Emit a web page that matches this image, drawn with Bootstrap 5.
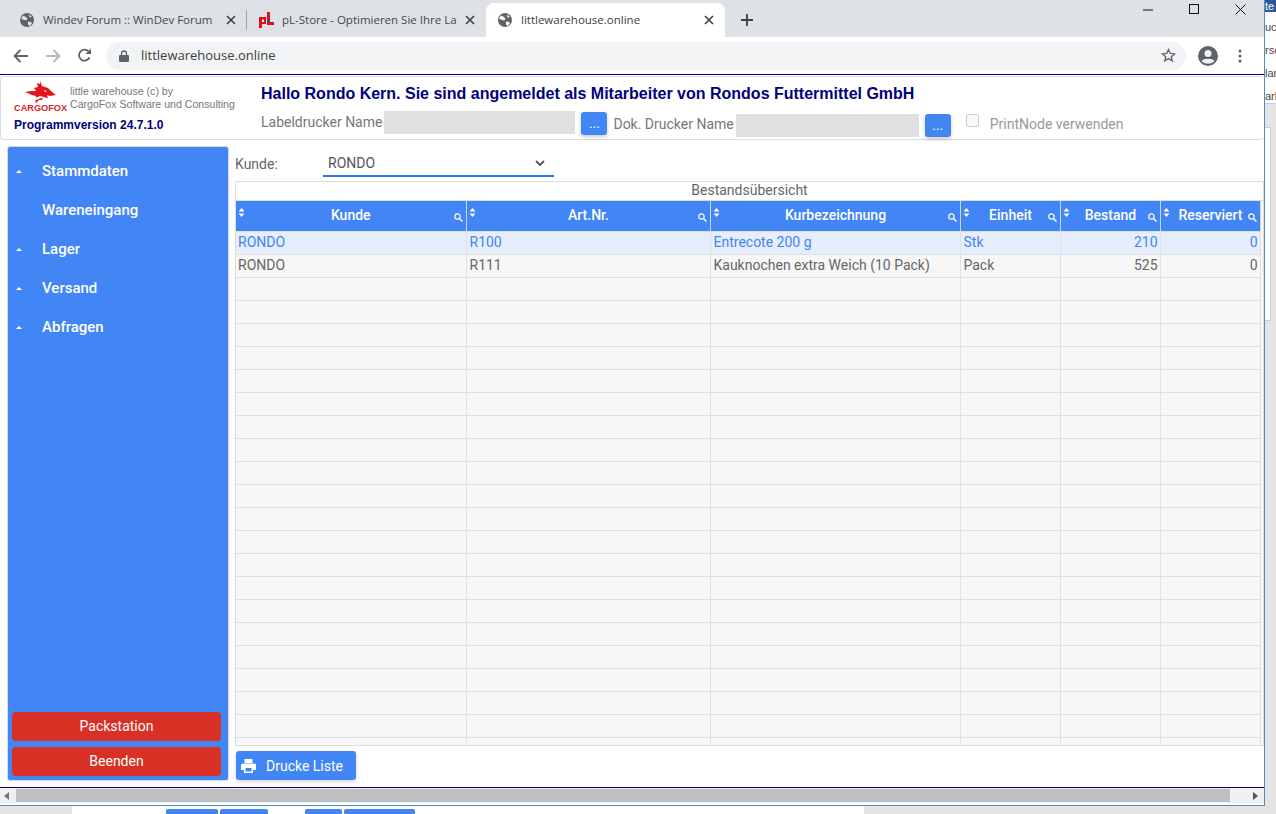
<!DOCTYPE html>
<html lang="de">
<head>
  <meta charset="UTF-8" />
  <title>littlewarehouse.online</title>
  <link href="https://cdn.jsdelivr.net/npm/bootstrap@5.3.0/dist/css/bootstrap.min.css" rel="stylesheet" />
  <style>
    html, body { height: 814px; overflow: hidden; }
    body { font-family: Roboto, "Liberation Sans", sans-serif; font-size: 14px; color: #666; background: #e4e4e4; }
    .shot { width: 1276px; height: 814px; }
    .win { width: 1265px; height: 806px; background: #fff; border-right: 1px solid #4a90c4; border-bottom: 1px solid #4a90c4; flex: none; }

    /* chrome */
    .tabstrip { height: 37px; background: #dee1e6; padding: 3px 0 0 9px; font-family: "Open Sans", sans-serif; font-size: 11.5px; color: #45484d; }
    .brtab { width: 234px; height: 34px; padding: 0 7px 0 11px; border-radius: 8px 8px 0 0; white-space: nowrap; }
    .brtab.second { width: 231px; padding: 0 6px 0 8px; }
    .brtab.on { background: #fff; width: 239px; padding: 0 11px 0 12px; margin-left: 5px; color: #3c4043; }
    .tabtitle { flex: 1; overflow: hidden; margin-left: 9px; }
    .brtab.second .tabtitle { margin-left: 8px; }
    .tabsep { width: 1px; height: 20px; background: #9da0a5; margin: 0 3px; flex: none; }
    .wincontrols { margin-left: auto; gap: 35px; padding: 0 18px 21px 0; }
    .toolrow { height: 37px; padding: 0 0 0 13px; }
    .omni { width: 1080px; height: 28px; margin-left: 14px; background: #f1f3f4; border-radius: 14px; padding: 0 10px 0 13px; font-family: "Open Sans", sans-serif; font-size: 13px; color: #3c4043; }
    .omnitext { margin-left: 12px; }
    .avatar { margin-left: 12px; }
    .kebab { margin-left: 20px; }
    .navyline { height: 2px; background: #fff; border-top: 1px solid #000080; }

    /* app header */
    .apphead { height: 64px; border: 1px solid #ddd; border-right: 0; border-radius: 4px; padding: 2px 0 0 13px; }
    .logoblock { width: 247px; flex: none; }
    .logomark { width: 51px; }
    .cargofox { font: bold 9.2px/11px "Liberation Sans", sans-serif; color: #d9261c; white-space: nowrap; }
    .bytext { line-height: 13px; color: #777; margin-left: 5px; padding-top: 6px; white-space: nowrap; font-family: "Liberation Sans", sans-serif; font-size: 10.6px; }
    .progver { font: bold 12px/14px "Liberation Sans", sans-serif; color: #000080; margin-top: 4px; }
    .hello { font: bold 16px/18px "Liberation Sans", sans-serif; color: #000080; margin: 6px 0 8px; white-space: nowrap; }
    .printrow { height: 26px; }
    .pname { background: #e0e0e0; height: 23px; flex: none; }
    .pname.label { width: 191px; margin-left: 2px; align-self: flex-start; }
    .pname.doc { width: 183px; margin-left: 2px; margin-top: 3px; }
    .dots { width: 26px; height: 23px; margin-left: 6px; background: #4285f4; color: #fff; border-radius: 3px; border: 0; padding: 0; font-size: 14px; line-height: 23px; box-shadow: 0 2px 4px rgba(0,0,0,.2); flex: none; }
    .dots.label { align-self: flex-start; margin-top: 1px; }
    .dots.doc { margin-top: 3px; }
    .plabel { color: #777; white-space: nowrap; }
    .plabel.label { align-self: flex-start; line-height: 23px; }
    .plabel.doc { margin-left: 6px; margin-top: 3px; }
    .plabel.node { margin-left: 11px; margin-top: 3px; color: #999; }
    .pcheck { width: 13px; height: 13px; margin-left: 15px; margin-top: 3px; border: 1px solid #ccc; border-radius: 2px; background: #f8f8f8; flex: none; }

    /* sidebar */
    .appbody { height: 647px; padding: 5px 0 0 7px; }
    .sidemenu { width: 222px; height: 635px; margin-top: 1px; background: #4285f4; border-radius: 3px; border: 1px solid #d5dbe6; padding: 5px 6px 4px 4px; flex: none; }
    .menuitem { height: 39px; color: #fff; font-size: 15px; font-weight: 500; }
    .arrowmark { width: 30px; padding-left: 4px; }
    .arrowmark i { display: block; width: 0; height: 0; border: 3px solid transparent; border-top: 0; border-bottom: 3px solid #fff; }
    .redbtn { height: 29px; width: 209px; background: #d93025; color: #fff; border: 0; border-radius: 4px; font-size: 14px; padding: 0; flex: none; }
    .redbtn + .redbtn { margin-top: 6px; }

    /* table area */
    .workarea { width: 1029px; margin-left: 6px; flex: none; }
    .kunderow { height: 25px; margin-top: 6px; }
    .kundelabel { width: 88px; padding-top: 2px; }
    .kundeselect { width: 231px; height: 26px; border-bottom: 2px solid #2a78f0; padding: 2px 9px 0 5px; color: #555; }
    .gridbox { height: 565px; margin: 5px 0 0 0; border: 1px solid #ddd; overflow: hidden; background: #f7f7f7; }
    .gridcaption { height: 19px; line-height: 17px; text-align: center; border-bottom: 1px solid #ddd; background: #fff; }
    .stock { table-layout: fixed; width: 1024px; margin: 0; --bs-table-bg: #f7f7f7; --bs-table-color: #666; }
    .stock col:nth-child(1) { width: 230px; }
    .stock col:nth-child(2) { width: 244px; }
    .stock col:nth-child(3) { width: 250px; }
    .stock col:nth-child(4), .stock col:nth-child(5), .stock col:nth-child(6) { width: 100px; }
    .stock > * > tr > * { border: 1px solid #e0e0e0; border-width: 0 1px 1px 0; padding: 0 2px 0 3px; height: 23px; line-height: 21px; white-space: nowrap; overflow: hidden; }
    .stock > * > tr > :first-child { padding: 0 2px; }
    .stock th { height: 30px !important; background: #4285f4; color: #fff; font-weight: 500; text-align: center; vertical-align: middle; border-right-color: #cfd6e2 !important; position: relative; }
    .stock .picked td { background: #e6eefb; color: #4285f4; }
    .stock td.num { text-align: right; }
    .sorticon { position: absolute; left: 2px; top: 7px; }
    .findicon { position: absolute; right: 3px; top: 12px; }
    .printbtn { width: 120px; height: 29px; margin: 5px 0 0 1px; background: #4285f4; color: #fff; border: 0; border-radius: 3px; padding: 0 0 0 5px; box-shadow: 0 2px 4px rgba(0,0,0,.15); font-size: 14px; gap: 10px; }
    .printtext { padding-top: 1px; }

    /* page scrollbar */
    .hscroll { height: 16px; background: #f0f0f0; border-top: 1px solid #000080; padding: 1px 0 0 0; }
    .hthumb { width: 1214px; height: 13px; background: #bfbfbf; margin: 0 23px 0 7px; flex: none; }
    .scrollarrow { flex: none; margin-top: 3px; }
    .scrollarrow.left { margin-left: 4px; }

    /* neighbouring window */
    .strip { width: 11px; height: 806px; overflow: hidden; background: #e4e4e4; flex: none; font-family: "Liberation Sans", sans-serif; font-size: 11px; }
    .striptop { height: 12px; background: #2b579a; color: #fff; line-height: 12px; }
    .striptext { background: #fff; height: 92px; color: #444; border-bottom: 1px solid #ccc; line-height: 23px; padding-top: 4px; white-space: nowrap; }
    .strippanel { width: 6px; height: 194px; margin-top: 23px; background: #fff; border: 1px solid #ccc; border-left: 0; }
    .backrow { height: 8px; overflow: hidden; padding-left: 72px; }
    .backwhite { width: 792px; background: #fff; height: 8px; padding: 3px 0 0 94px; gap: 2px; }
    .backbtn { height: 5px; background: #4285f4; border-radius: 2px 2px 0 0; flex: none; }
    .backbtn.b1 { width: 52px; }
    .backbtn.b2 { width: 48px; }
    .backbtn.b3 { width: 37px; margin-left: 35px; }
    .backbtn.b4 { width: 71px; }
  </style>
</head>
<body>
<div class="shot">
  <div class="d-flex">
    <div class="win">
      <!-- browser tabs -->
      <div class="tabstrip d-flex">
        <div class="brtab d-flex align-items-center">
          <svg width="14" height="14" viewBox="0 0 14 14" class="flex-shrink-0"><circle cx="7" cy="7" r="7" fill="#5f6368"/><path d="M3 2.500l3 1.500 1.500 2-1.500 1.500-3-1-2-1zM8 8.500l3 .5 1 1.500-2.500 2.500-1.500-1.500zM9 1.500l3 2.500-2.500.5z" fill="#dee1e6"/></svg>
          <span class="tabtitle">Windev Forum :: WinDev Forum</span>
          <svg width="10" height="10" viewBox="0 0 10 10"><path d="M1 1l8 8M9 1l-8 8" stroke="#3c4043" stroke-width="1.600"/></svg>
        </div>
        <div class="tabsep align-self-center"></div>
        <div class="brtab second d-flex align-items-center">
          <svg width="16" height="18" viewBox="0 0 16 18" class="flex-shrink-0"><path d="M9 1h3v10h4v3H9z" fill="#e0101a"/><path d="M1 6h7v7H4v4H1z" fill="#e0101a"/><path d="M4 8.500h2v2.500H4z" fill="#fff"/><path d="M9 9h3v2H9z" fill="#2a4a9a"/></svg>
          <span class="tabtitle">pL-Store - Optimieren Sie Ihre La</span>
          <svg width="10" height="10" viewBox="0 0 10 10"><path d="M1 1l8 8M9 1l-8 8" stroke="#3c4043" stroke-width="1.600"/></svg>
        </div>
        <div class="brtab on d-flex align-items-center">
          <svg width="14" height="14" viewBox="0 0 14 14" class="flex-shrink-0"><circle cx="7" cy="7" r="7" fill="#5f6368"/><path d="M3 2.500l3 1.500 1.500 2-1.500 1.500-3-1-2-1zM8 8.500l3 .5 1 1.500-2.500 2.500-1.500-1.500zM9 1.500l3 2.500-2.500.5z" fill="#fff"/></svg>
          <span class="tabtitle">littlewarehouse.online</span>
          <svg width="10" height="10" viewBox="0 0 10 10"><path d="M1 1l8 8M9 1l-8 8" stroke="#3c4043" stroke-width="1.600"/></svg>
        </div>
        <div class="d-flex align-items-center ms-3">
          <svg width="12" height="12" viewBox="0 0 12 12"><path d="M6 0v12M0 6h12" stroke="#3c4043" stroke-width="1.800"/></svg>
        </div>
        <div class="wincontrols d-flex align-items-center">
          <svg width="11" height="11" viewBox="0 0 11 11"><path d="M0 6h10" stroke="#111"/></svg>
          <svg width="11" height="11" viewBox="0 0 11 11"><rect x=".5" y=".5" width="9" height="9" fill="none" stroke="#111"/></svg>
          <svg width="11" height="11" viewBox="0 0 11 11"><path d="M.5.5l10 10M10.500.5l-10 10" stroke="#111"/></svg>
        </div>
      </div>
      <!-- address bar -->
      <div class="toolrow d-flex align-items-center">
        <svg width="16" height="14" viewBox="0 0 16 14"><path d="M15 7H2M7.500 1L1.500 7l6 6" fill="none" stroke="#5f6368" stroke-width="1.800"/></svg>
        <svg class="ms-3" width="16" height="14" viewBox="0 0 16 14"><path d="M1 7h13M8.500 1l6 6-6 6" fill="none" stroke="#b4b7bb" stroke-width="1.800"/></svg>
        <svg class="ms-3" width="15" height="15" viewBox="0 0 15 15"><path d="M12.500 9.500A5.500 5.500 0 1 1 12 4" fill="none" stroke="#5f6368" stroke-width="1.800"/><path d="M14 .5V6H8.500z" fill="#5f6368"/></svg>
        <div class="omni d-flex align-items-center">
          <svg width="10" height="12" viewBox="0 0 10 12"><rect y="5" width="10" height="7" rx="1" fill="#5f6368"/><path d="M2.500 5V3.500a2.500 2.500 0 0 1 5 0V5" fill="none" stroke="#5f6368" stroke-width="1.300"/></svg>
          <span class="omnitext">littlewarehouse.online</span>
          <svg class="ms-auto" width="15" height="15" viewBox="0 0 15 15"><path d="M7.500 1.500l1.800 4 4.200.4-3.200 2.800 1 4.200-3.800-2.300-3.800 2.300 1-4.200L1.500 5.900l4.200-.4z" fill="none" stroke="#5f6368" stroke-width="1.300"/></svg>
        </div>
        <svg class="avatar" width="20" height="20" viewBox="0 0 20 20"><circle cx="10" cy="10" r="10" fill="#5f6368"/><circle cx="10" cy="7.500" r="3.500" fill="#f1f3f4"/><path d="M3.500 15c2-3 11-3 13 0-3 3.500-10 3.500-13 0z" fill="#f1f3f4"/></svg>
        <svg class="kebab" width="4" height="14" viewBox="0 0 4 14"><circle cx="2" cy="2" r="1.500" fill="#5f6368"/><circle cx="2" cy="7" r="1.500" fill="#5f6368"/><circle cx="2" cy="12" r="1.500" fill="#5f6368"/></svg>
      </div>
      <div class="navyline"></div>

      <!-- app header -->
      <div class="apphead d-flex">
        <div class="logoblock">
          <div class="d-flex">
            <div class="logomark">
              <svg width="51" height="24" viewBox="0 0 51 24" class="d-block">
                <path d="M26 2l2 5 6 2 4 4 4 3-6 1-3-1 1 3-5-1-1 3-3 0-3 3-1-3 1-4-4-1-7-3 6-1 5 0-2-3 4-1-1-4 3 1z" fill="#e3161d"/>
                <path d="M18 20l8-3 4 1-10 4zM30 11l3 1-2 1z" fill="#fff"/>
              </svg>
              <div class="cargofox">CARGOFOX</div>
            </div>
            <div class="bytext">little warehouse (c) by<br>CargoFox Software und Consulting</div>
          </div>
          <div class="progver">Programmversion 24.7.1.0</div>
        </div>
        <div class="flex-grow-1">
          <div class="hello">Hallo Rondo Kern. Sie sind angemeldet als Mitarbeiter von Rondos Futtermittel GmbH</div>
          <div class="printrow d-flex align-items-start">
            <span class="plabel label">Labeldrucker Name</span>
            <div class="pname label"></div>
            <button class="dots label" type="button">...</button>
            <span class="plabel doc">Dok. Drucker Name</span>
            <div class="pname doc"></div>
            <button class="dots doc" type="button">...</button>
            <div class="pcheck"></div>
            <span class="plabel node">PrintNode verwenden</span>
          </div>
        </div>
      </div>

      <!-- app body -->
      <div class="appbody d-flex">
        <div class="sidemenu d-flex flex-column">
          <div class="menuitem d-flex align-items-center"><span class="arrowmark"><i></i></span>Stammdaten</div>
          <div class="menuitem d-flex align-items-center"><span class="arrowmark"></span>Wareneingang</div>
          <div class="menuitem d-flex align-items-center"><span class="arrowmark"><i></i></span>Lager</div>
          <div class="menuitem d-flex align-items-center"><span class="arrowmark"><i></i></span>Versand</div>
          <div class="menuitem d-flex align-items-center"><span class="arrowmark"><i></i></span>Abfragen</div>
          <button class="redbtn mt-auto" type="button">Packstation</button>
          <button class="redbtn" type="button">Beenden</button>
        </div>
        <div class="workarea">
          <div class="kunderow d-flex align-items-center">
            <span class="kundelabel">Kunde:</span>
            <div class="kundeselect d-flex align-items-center justify-content-between">
              <span>RONDO</span>
              <svg width="10" height="7" viewBox="0 0 10 7"><path d="M1 1l4 4 4-4" fill="none" stroke="#555" stroke-width="1.800"/></svg>
            </div>
          </div>
          <div class="gridbox">
            <div class="gridcaption">Bestandsübersicht</div>
            <table class="table stock" id="stock">
              <colgroup><col><col><col><col><col><col></colgroup>
              <thead><tr id="heads"></tr></thead>
              <tbody id="rows"></tbody>
            </table>
          </div>
          <button class="printbtn d-flex align-items-center" type="button">
            <svg width="15" height="14" viewBox="0 0 15 14"><path d="M3.500 0h8v4h-8zM1.500 4.500h12a1.500 1.500 0 0 1 1.500 1.500v5h-3v3H3v-3H0V6a1.500 1.500 0 0 1 1.500-1.500z" fill="#fff"/><path d="M4.500 9h6v3.500h-6z" fill="#4285f4"/></svg>
            <span class="printtext">Drucke Liste</span>
          </button>
        </div>
      </div>
      <div class="hscroll d-flex">
        <svg class="scrollarrow left" width="5" height="8" viewBox="0 0 5 8"><path d="M5 0v8L0 4z" fill="#777"/></svg>
        <div class="hthumb"></div>
        <svg class="scrollarrow" width="5" height="8" viewBox="0 0 5 8"><path d="M0 0v8l5-4z" fill="#555"/></svg>
      </div>
    </div>
    <div class="strip">
      <div class="striptop">te</div>
      <div class="striptext">uc<br>rse<br>lar<br>arb</div>
      <div class="strippanel"></div>
    </div>
  </div>
  <div class="backrow">
    <div class="backwhite d-flex">
      <div class="backbtn b1"></div>
      <div class="backbtn b2"></div>
      <div class="backbtn b3"></div>
      <div class="backbtn b4"></div>
    </div>
  </div>
</div>

<script src="https://cdn.jsdelivr.net/npm/bootstrap@5.3.0/dist/js/bootstrap.bundle.min.js"></script>
<script>
  const heads = ['Kunde', 'Art.Nr.', 'Kurbezeichnung', 'Einheit', 'Bestand', 'Reserviert'];
  const data = [
    ['RONDO', 'R100', 'Entrecote 200 g', 'Stk', '210', '0'],
    ['RONDO', 'R111', 'Kauknochen extra Weich (10 Pack)', 'Pack', '525', '0']
  ];
  const sortSvg = '<svg class="sorticon" width="7" height="9" viewBox="0 0 7 9"><path d="M3.500 0L6.500 3.500h-6zM3.500 9L.5 5.500h6z" fill="#fff"/></svg>';
  const findSvg = '<svg class="findicon" width="9" height="9" viewBox="0 0 9 9"><circle cx="3.500" cy="3.500" r="2.700" fill="none" stroke="#fff" stroke-width="1.200"/><path d="M5.500 5.500L8.500 8.500" stroke="#fff" stroke-width="1.500"/></svg>';
  document.getElementById('heads').innerHTML = heads.map(h => `<th>${sortSvg}${h}${findSvg}</th>`).join('');
  let html = '';
  for (let i = 0; i < 24; i++) {
    const row = data[i] || ['', '', '', '', '', ''];
    html += `<tr class="${i === 0 ? 'picked' : ''}">` + row.map((v, c) => `<td class="${c > 3 ? 'num' : ''}">${v}</td>`).join('') + '</tr>';
  }
  document.getElementById('rows').innerHTML = html;
</script>
</body>
</html>
